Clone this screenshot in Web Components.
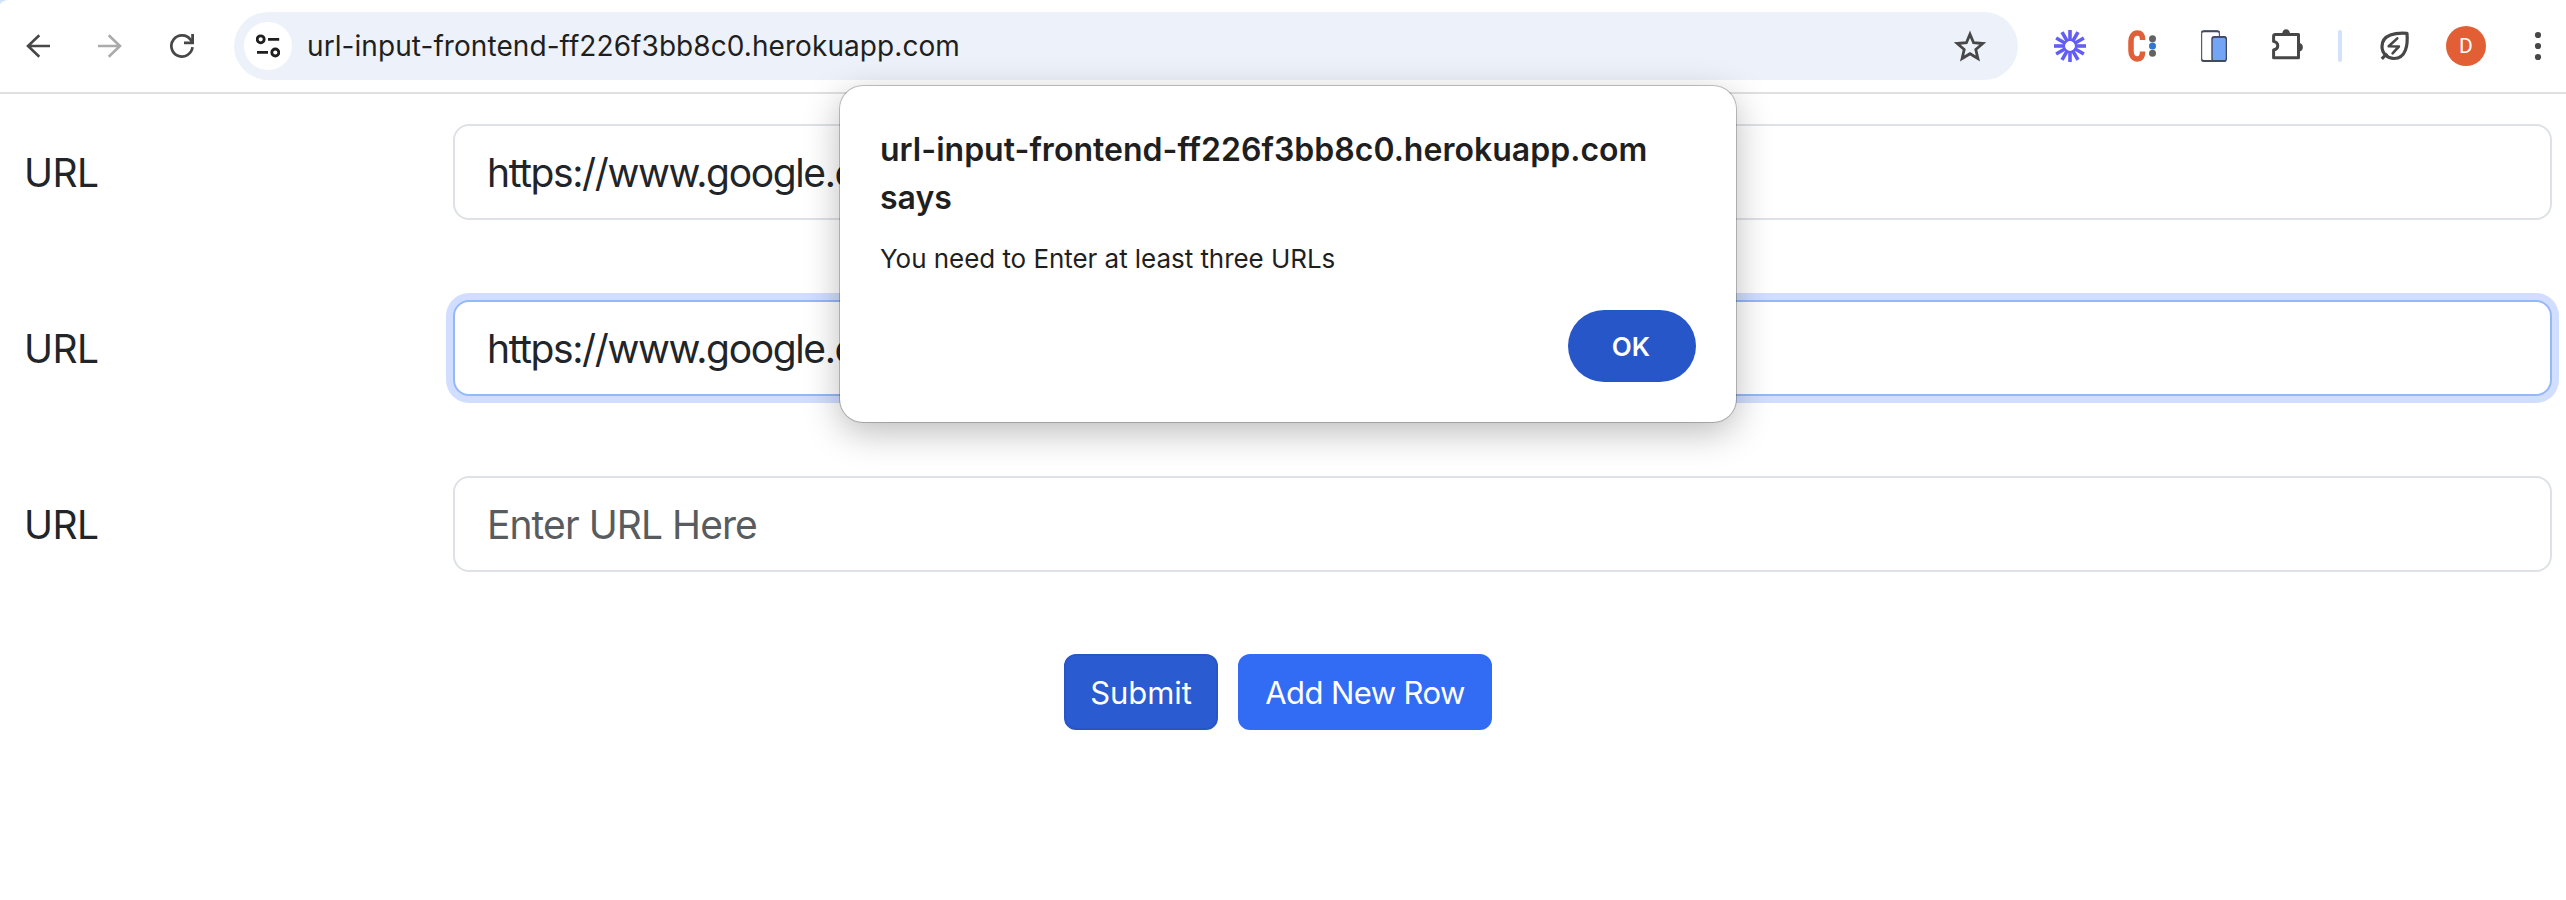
<!DOCTYPE html>
<html lang="en">
<head>
<meta charset="utf-8">
<title>URL input</title>
<style>
  html, body { margin: 0; height: 100%; background: #fff; overflow: hidden; }
  body { font-family: Inter, "Liberation Sans", sans-serif; color: #212529; }
</style>
</head>
<body>
<browser-window>
  <browser-toolbar slot="toolbar" address="url-input-frontend-ff226f3bb8c0.herokuapp.com"></browser-toolbar>
  <url-form>
    <url-row label="URL">https://www.google.c</url-row>
    <url-row label="URL" focused>https://www.google.c</url-row>
    <url-row label="URL" empty>Enter URL Here</url-row>
    <form-button slot="actions" pressed style="--ls:-.1px;--w:154px">Submit</form-button>
    <form-button slot="actions" style="--ls:-.58px;--w:254px">Add New Row</form-button>
  </url-form>
  <alert-dialog slot="dialog">
    <span slot="title">url-input-frontend-ff226f3bb8c0.herokuapp.com says</span>
    <span slot="message">You need to Enter at least three URLs</span>
  </alert-dialog>
</browser-window>
<script>
const define = (name, html, setup) => customElements.define(name, class extends HTMLElement {
  connectedCallback() {
    if (this.shadowRoot) return;
    const t = document.createElement('template');
    t.innerHTML = html;
    this.attachShadow({ mode: 'open' }).append(t.content.cloneNode(true));
    if (setup) setup(this, this.shadowRoot);
  }
});

define('browser-window', `
  <style>
    :host { display: flex; flex-direction: column; position: relative; width: 2566px; height: 900px; overflow: hidden; background: #fff; }
    ::slotted([slot=dialog]) { position: absolute; left: 840px; top: 86px; }
  </style>
  <slot name="toolbar"></slot><slot></slot><slot name="dialog"></slot>`);

const ICONS = {
  back: [24, 24, `<path d="M13.3 1.2 2 12l11.3 10.8M2 12h22" stroke="#474747" stroke-width="2.6"/>`],
  forward: [24, 24, `<path d="M10.7 1.2 22 12 10.7 22.800M22 12H0" stroke="#ababab" stroke-width="2.6"/>`],
  reload: [24, 24, `<path d="M22.500 13.200A10.600 10.600 0 1 1 20.600 5.800L22 8" stroke="#474747" stroke-width="2.7"/><path d="M24 0v10.200H14V7.600h7.200V0z" fill="#474747"/>`],
  tune: [24, 24, `<g stroke="#1f1f1f" stroke-width="2.8"><circle cx="4.700" cy="5.300" r="3.500"/><path d="M12 5.400h11.200M1 18.400h11"/><circle cx="19.300" cy="18.500" r="3.500"/></g>`],
  star: [32, 32, `<path d="m16 4.200 3.600 8.500 9.200.800-7 6 2.100 9L16 23.700l-7.900 4.800 2.100-9-7-6 9.200-.8z" stroke="#474747" stroke-width="2.800"/>`],
  burst: [32, 32, `<g stroke="#625df5" stroke-width="3.600">${Array.from({ length: 12 }, (_, i) => `<path d="M16 0v11" transform="rotate(${i * 30} 16 16)"/>`).join('')}</g><circle cx="16" cy="16" r="6" stroke="#625df5" stroke-width="2"/>`],
  mark: [30, 32, `<path d="M15.600 10C15.600 5 14 3 10.300 3S4 6.500 4 11v10c0 4.500 2.500 8 6.300 8s5.300-2.500 5.300-7.500" stroke="#e0603a" stroke-width="5.500"/><circle cx="25.500" cy="8.700" r="3.500" fill="#626262"/><circle cx="25.500" cy="16" r="3.500" fill="#2f77d0"/><circle cx="25.500" cy="23.300" r="3.500" fill="#626262"/>`],
  devices: [26, 32, `<rect x=".6" y="1" width="17.800" height="30" rx="2.500" fill="#fff" stroke="#555b70" stroke-width="1.200"/><path d="M1 2.500Q1 1.200 3 1.200h13q2 0 2 1.300M1 29.500q0 1.500 2 1.500h9" stroke="#434a60" stroke-width="2"/><rect x="11" y="7" width="14.400" height="24.200" rx="2.500" fill="#72a5f4" stroke="#434a60" stroke-width="1.400"/><path d="M11.500 8.500q0-1.700 2-1.700h9.500q2 0 2 1.700M12 30.800h13" stroke="#434a60" stroke-width="1.800"/>`],
  puzzle: [32, 32, `<path d="M3.500 5.500h23v23.200H1.600V21q4.200-1 4.200-4.300T1.600 12.400V7.200q0-1.700 1.900-1.700z" stroke="#474747" stroke-width="3" stroke-linejoin="round"/><path d="M10.200 5a3.900 4.800 0 0 1 7.800 0zM27.500 14a4.300 4.300 0 0 1 0 8.400z" fill="#474747"/>`],
  leaf: [30, 30, `<path d="M27 2.300C16 1.600 2 3 2 15.500 2 22.500 7.500 27.500 14 27.500 26 27.500 28 14 27 2.300z" stroke="#474747" stroke-width="3.200" stroke-linejoin="round"/><path d="M1.800 27.800 7 22.500" stroke="#474747" stroke-width="3.200"/><path d="m17.300 7.400-8.600 7.900 10.200.200-6.300 6.800" stroke="#474747" stroke-width="2.600" stroke-linejoin="round" stroke-linecap="round"/>`],
  more: [8, 32, `<g fill="#474747"><circle cx="4" cy="5" r="3.100"/><circle cx="4" cy="16" r="3.100"/><circle cx="4" cy="27" r="3.100"/></g>`]
};
define('tool-icon', `<style>:host{display:block;flex:none} svg{display:block}</style>`, (el, root) => {
  const [w, h, body] = ICONS[el.getAttribute('name')];
  root.innerHTML += `<svg width="${w}" height="${h}" viewBox="0 0 ${w} ${h}" fill="none">${body}</svg>`;
});

define('browser-toolbar', `
  <style>
    :host { display: block; flex: none; height: 94px; background: #d3e1fb; }
    .bar { box-sizing: border-box; height: 94px; display: flex; align-items: center; padding-left: 26px; border-bottom: 2px solid #e0e0e0; background: #fff; border-top-left-radius: 10px 5px; }
    .nav { display: flex; gap: 48px; width: 208px; }
    .omni { box-sizing: border-box; width: 1784px; height: 68px; border-radius: 34px; background: #edf2fa; display: flex; align-items: center; padding: 0 32px 0 10px; }
    .site { width: 48px; height: 48px; border-radius: 50%; background: #fff; display: grid; place-items: center; }
    .addr { flex: 1; margin-left: 15px; font-size: 28px; line-height: 40px; letter-spacing: .07px; color: #1f1f1f; }
    .ext { display: flex; align-items: center; margin-left: 36px; }
    .sep { width: 4px; height: 32px; border-radius: 2px; background: #d3e1fb; }
    .avatar { width: 40px; height: 40px; border-radius: 50%; background: #e25f35; color: #fff; font: 21px/41px Roboto, sans-serif; text-align: center; }
  </style>
  <div class="bar">
    <div class="nav"><tool-icon name="back"></tool-icon><tool-icon name="forward"></tool-icon><tool-icon name="reload"></tool-icon></div>
    <div class="omni"><div class="site"><tool-icon name="tune"></tool-icon></div><div class="addr"></div><tool-icon name="star"></tool-icon></div>
    <div class="ext">
      <tool-icon name="burst"></tool-icon>
      <tool-icon name="mark" style="margin-left:41px"></tool-icon>
      <tool-icon name="devices" style="margin-left:44px"></tool-icon>
      <tool-icon name="puzzle" style="margin-left:45px;margin-top:-2px"></tool-icon>
      <div class="sep" style="margin-left:34px"></div>
      <tool-icon name="leaf" style="margin-left:38px"></tool-icon>
      <div class="avatar" style="margin-left:36px">D</div>
      <tool-icon name="more" style="margin-left:48px"></tool-icon>
    </div>
  </div>`, (el, root) => { root.querySelector('.addr').textContent = el.getAttribute('address'); });

define('url-form', `
  <style>
    :host { display: flex; flex-direction: column; gap: 80px; padding: 30px 14px 0 24px; }
    .actions { display: flex; gap: 20px; margin-left: 1040px; margin-top: 2px; }
  </style>
  <slot></slot><div class="actions"><slot name="actions"></slot></div>`);

define('url-row', `
  <style>
    :host { display: grid; grid-template-columns: 429px 1fr; align-items: center; font-size: 39px; line-height: 60px; }
    label { letter-spacing: -.6px; padding-top: 2px; }
    .field { box-sizing: border-box; height: 96px; padding: 17px 32px 15px; border: 2px solid #dee2e6; border-radius: 16px; background: #fff; letter-spacing: -1.37px; }
    .value { width: 353px; overflow: hidden; white-space: nowrap; }
    :host([focused]) .field { border-color: #95b8f8; box-shadow: 0 0 0 7px #d1deff; }
    :host([empty]) .field { color: #595c5f; letter-spacing: -.93px; }
  </style>
  <label></label><div class="field"><div class="value"><slot></slot></div></div>`, (el, root) => { root.querySelector('label').textContent = el.getAttribute('label'); });

define('form-button', `
  <style>
    :host { display: block; }
    button { display: block; width: var(--w); height: 76px; padding: 2px 0 0; border: 2px solid #326bf4; border-radius: 12px; background: #326bf4; color: #fff; font: 31px/48px Inter, sans-serif; letter-spacing: var(--ls); white-space: nowrap; }
    :host([pressed]) button { background: #2a5bd0; border-color: #2856c4; }
  </style>
  <button><slot></slot></button>`);

define('alert-dialog', `
  <style>
    :host { display: flex; flex-direction: column; box-sizing: border-box; width: 896px; height: 336px; padding: 40px; border-radius: 23px; background: #fff; color: #1f1f1f; box-shadow: 0 0 0 1px rgba(0,0,0,.22), 0 10px 36px rgba(0,0,0,.27); }
    h1 { margin: 0; font-size: 32px; line-height: 48px; font-weight: 600; letter-spacing: .02px; width: 800px; }
    p { margin: 17px 0 0; font-size: 26px; line-height: 40px; letter-spacing: -.05px; }
    button { margin: auto 0 0 auto; width: 128px; height: 72px; padding: 1px 2px 0 0; border: 0; border-radius: 36px; background: #2756c9; color: #fff; font: 600 26px/40px Inter, sans-serif; }
  </style>
  <h1><slot name="title"></slot></h1><p><slot name="message"></slot></p><button>OK</button>`);
</script>
</body>
</html>
